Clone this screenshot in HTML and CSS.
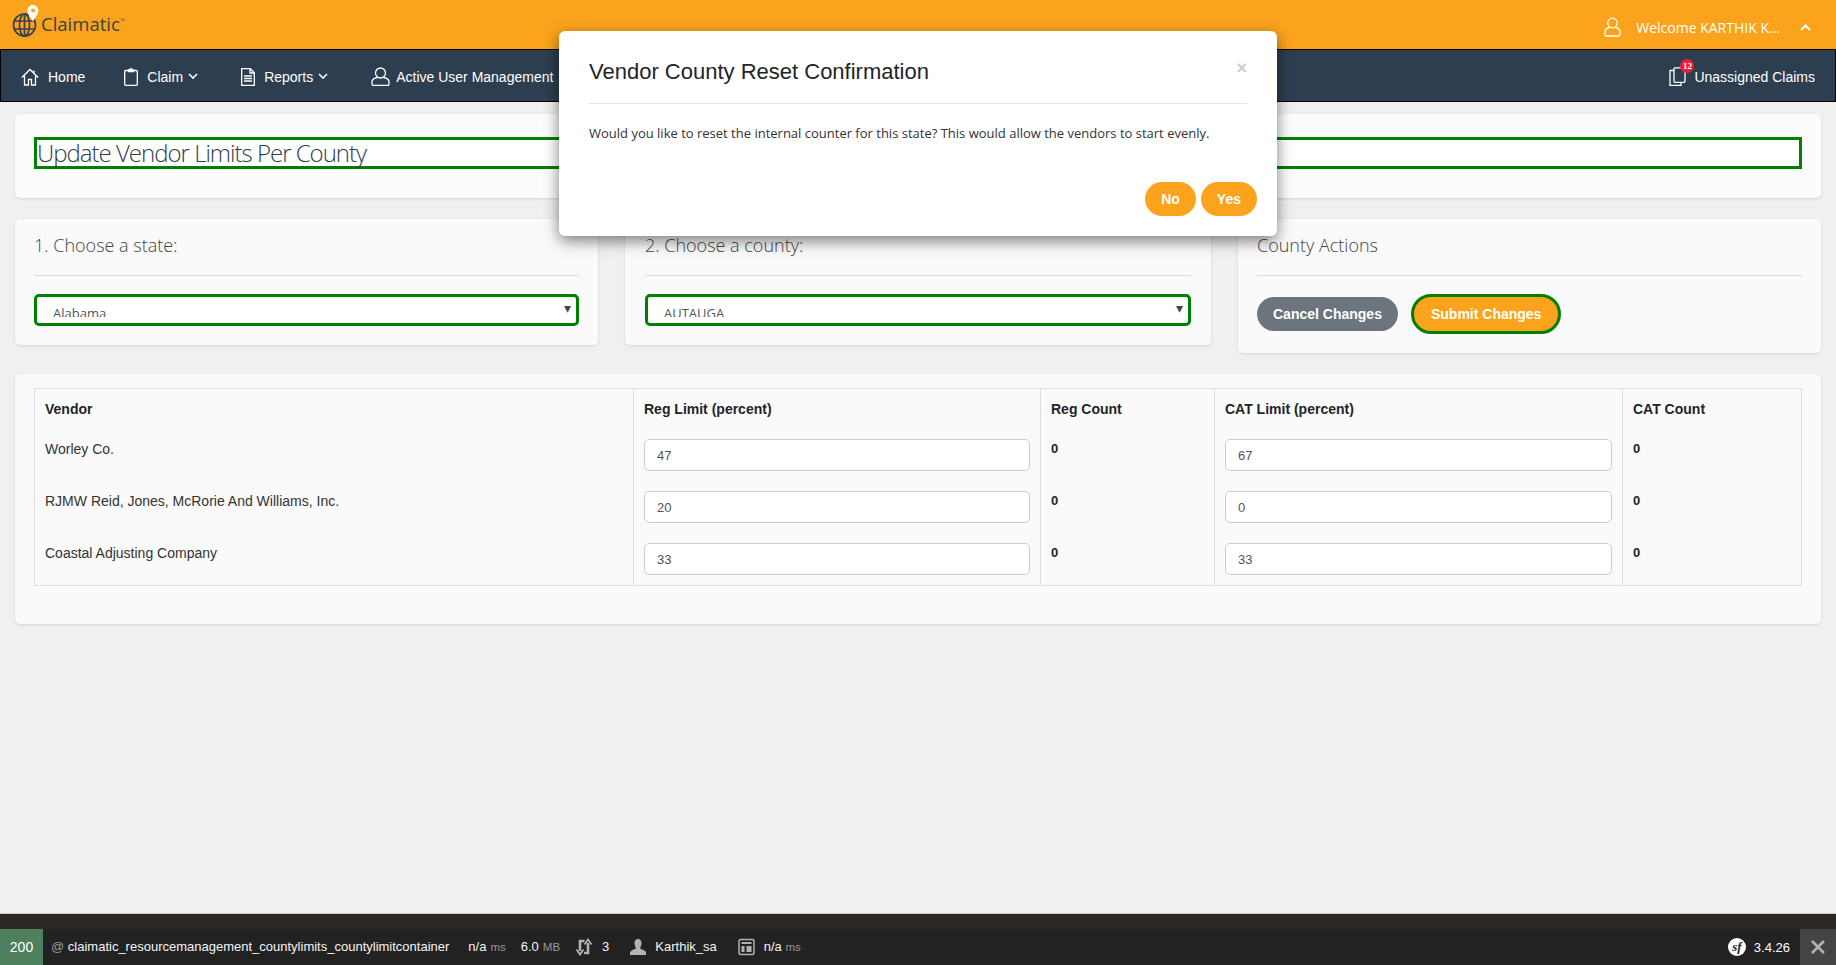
FILE: index.html
```html
<!DOCTYPE html>
<html lang="en">
<head>
  <meta charset="UTF-8"/>
  <meta name="viewport" content="width=device-width, initial-scale=1.0"/>
  <title>Update Vendor Limits Per County</title>
  <link rel="stylesheet" href="styles.css">
</head>
<body>
  <div class="topbar">
    <div class="logo">
      <svg class="logo-mark" width="28" height="34" viewBox="0 0 28 34">
        <g fill="none" stroke="#3b4148" stroke-width="1.7">
          <circle cx="12.5" cy="21" r="11"/>
          <ellipse cx="12.5" cy="21" rx="5" ry="11"/>
          <path d="M12.5 10v22M2 17h21M2 25h21"/>
        </g>
        <path d="M21 1c-3.3 0-5.6 2.5-5.6 5.5 0 3.500 3.400 7 5.600 11 2.200-4 5.400-7.500 5.400-11 0-3-2.200-5.500-5.400-5.500z" fill="#fff"/>
        <circle cx="21" cy="6.500" r="2" fill="#fba31c"/>
      </svg>
      <span class="logo-text">Claimatic</span><span class="logo-tm">™</span>
    </div>
    <div class="welcome">
      <svg width="17" height="20" viewBox="0 0 17 20" fill="none" stroke="#fff" stroke-width="1.300">
        <circle cx="8.500" cy="6" r="4.800"/>
        <path d="M5.500 10.500C2.500 11 1 12.500 1 15v2.500c0 .8.500 1.500 1.500 1.500h12c1 0 1.500-.7 1.500-1.500V15c0-2.500-1.500-4-4.500-4.500"/>
      </svg>
      <span class="welcome-name">Welcome KARTHIK K...</span>
      <svg width="11" height="7" viewBox="0 0 11 7" fill="none" stroke="#fff" stroke-width="2"><path d="M1 6l4.500-4.500L10 6"/></svg>
    </div>
  </div>

  <div class="navbar">
    <div class="nav-left">
      <a class="nav-item nav-home">
        <svg width="18" height="18" viewBox="0 0 18 18" fill="none" stroke="#fff" stroke-width="1.300">
          <path d="M.8 9.500L9 1.500l8.200 8M3.500 7.500V17h4v-5.500h3V17h4V7.500M13 2.500v2.500"/>
        </svg>
        Home
      </a>
      <a class="nav-item">
        <svg width="14" height="18" viewBox="0 0 14 18" fill="none" stroke="#fff" stroke-width="1.300">
          <rect x=".7" y="2.500" width="12.600" height="14.800" rx="1"/>
          <path d="M4.500 3.500V1.800h1.800V.8h1.400v1h1.800v1.700z"/>
        </svg>
        <span>Claim</span>
        <svg class="chev" width="10" height="6" viewBox="0 0 10 6" fill="none" stroke="#fff" stroke-width="1.600"><path d="M1 1l4 4 4-4"/></svg>
      </a>
      <a class="nav-item">
        <svg width="14" height="18" viewBox="0 0 14 18" fill="none" stroke="#fff" stroke-width="1.300">
          <path d="M.7.7h8.600l4 4v12.600H.7zM9 .7v4.300h4.300"/>
          <path d="M3 8h8M3 10.500h8M3 13h8" stroke-width="1.600"/>
        </svg>
        <span>Reports</span>
        <svg class="chev" width="10" height="6" viewBox="0 0 10 6" fill="none" stroke="#fff" stroke-width="1.600"><path d="M1 1l4 4 4-4"/></svg>
      </a>
      <a class="nav-item nav-users">
        <svg width="19" height="19" viewBox="0 0 19 19" fill="none" stroke="#fff" stroke-width="1.300">
          <circle cx="9.500" cy="6" r="5"/>
          <path d="M6.500 10.500C3 11 1 12.500 1 15v2c0 1 .7 1.500 1.500 1.500h14c.8 0 1.500-.5 1.500-1.500v-2c0-2.500-2-4-5.500-4.500"/>
        </svg>
        Active User Management
      </a>
    </div>
    <a class="nav-item unassigned">
      <span class="claims-icon">
        <svg width="17" height="19" viewBox="0 0 17 19" fill="none" stroke="#fff" stroke-width="1.300">
          <path d="M5 3.500H1v14.800h11v-3"/>
          <rect x="5" y=".8" width="11" height="14.500" rx="1"/>
        </svg>
        <span class="badge">12</span>
      </span>
      Unassigned Claims
    </a>
  </div>

  <div class="main-content">
    <div class="card title-card">
      <h1 class="page-title">Update Vendor Limits Per County</h1>
    </div>

    <div class="card-row">
      <div class="card">
        <h3 class="card-head">1. Choose a state:</h3>
        <div class="select-box"><span class="select-value">Alabama</span><i class="select-arrow">▾</i></div>
      </div>
      <div class="card card-mid">
        <h3 class="card-head">2. Choose a county:</h3>
        <div class="select-box"><span class="select-value">AUTAUGA</span><i class="select-arrow">▾</i></div>
      </div>
      <div class="card">
        <h3 class="card-head">County Actions</h3>
        <div class="actions">
          <button class="btn btn-grey">Cancel Changes</button>
          <button class="btn btn-orange btn-focus">Submit Changes</button>
        </div>
      </div>
    </div>

    <div class="card table-card">
      <table class="vendor-table">
        <colgroup>
          <col class="col-vendor"><col class="col-reg"><col class="col-count"><col class="col-cat"><col>
        </colgroup>
        <thead>
          <tr>
            <th>Vendor</th><th>Reg Limit (percent)</th><th>Reg Count</th><th>CAT Limit (percent)</th><th>CAT Count</th>
          </tr>
        </thead>
        <tbody>
          <tr>
            <td>Worley Co.</td>
            <td><input type="text" value="47"/></td>
            <td class="num">0</td>
            <td><input type="text" value="67"/></td>
            <td class="num">0</td>
          </tr>
          <tr>
            <td>RJMW Reid, Jones, McRorie And Williams, Inc.</td>
            <td><input type="text" value="20"/></td>
            <td class="num">0</td>
            <td><input type="text" value="0"/></td>
            <td class="num">0</td>
          </tr>
          <tr>
            <td>Coastal Adjusting Company</td>
            <td><input type="text" value="33"/></td>
            <td class="num">0</td>
            <td><input type="text" value="33"/></td>
            <td class="num">0</td>
          </tr>
        </tbody>
      </table>
    </div>
  </div>

  <div class="debugbar">
    <div class="debug-strip"></div>
    <div class="debug-row">
      <span class="debug-status">200</span>
      <span class="debug-route"><em>@</em> claimatic_resourcemanagement_countylimits_countylimitcontainer</span>
      <span class="debug-item">n/a <em>ms</em></span>
      <span class="debug-item">6.0 <em>MB</em></span>
      <span class="debug-item debug-wide">
        <svg width="18" height="18" viewBox="0 0 18 18" fill="none" stroke="#b3b3b3" stroke-width="2.600">
          <path d="M9.500 3H5v10M9 15h4V5"/>
          <path d="M1.500 11.500L5 16.500l3.500-5M9.500 6.500L13 1.500l3.500 5" stroke-width="1.800"/>
        </svg>
        3
      </span>
      <span class="debug-item debug-wide">
        <svg width="16" height="18" viewBox="0 0 16 18" fill="#b3b3b3">
          <path d="M8 1c2.300 0 3.500 1.700 3.500 4S10.300 9.500 10 10.500c2 1 5 2 6 3.500v3H0v-3c1-1.500 4-2.500 6-3.500C5.700 9.500 4.500 7.300 4.500 5S5.700 1 8 1z"/>
        </svg>
        Karthik_sa
      </span>
      <span class="debug-item debug-wide">
        <svg width="17" height="18" viewBox="0 0 17 18" fill="none" stroke="#b3b3b3" stroke-width="1.500">
          <rect x="1" y="1.500" width="15" height="15" rx="2"/>
          <path d="M3.500 5h10" stroke-width="2"/>
          <path d="M3.500 8h3v6h-3zM8.500 8h5v6h-5z" fill="#b3b3b3" stroke="none"/>
        </svg>
        <span>n/a <em>ms</em></span>
      </span>
      <span class="debug-right">
        <span class="sf-logo">sf</span>
        <span class="debug-version">3.4.26</span>
        <span class="debug-close">
          <svg width="14" height="14" viewBox="0 0 14 14" stroke="#b3b3b3" stroke-width="2.600"><path d="M1 1l12 12M13 1L1 13"/></svg>
        </span>
      </span>
    </div>
  </div>

  <div class="modal">
    <div class="modal-head">
      <h4 class="modal-title">Vendor County Reset Confirmation</h4>
      <span class="modal-close">×</span>
    </div>
    <p class="modal-body">Would you like to reset the internal counter for this state? This would allow the vendors to start evenly.</p>
    <div class="modal-foot">
      <button class="btn btn-orange">No</button>
      <button class="btn btn-orange">Yes</button>
    </div>
  </div>
</body>
</html>
```

FILE: styles.css
```css
* { box-sizing: border-box; margin: 0; padding: 0; }
html, body {
  height: 100%;
  overflow: hidden;
}

body {
  display: flex;
  flex-direction: column;
  position: relative;
  font-family: 'Liberation Sans', Arial, sans-serif;
  font-size: 14px;
  color: #212529;
  background: #f0f0f0;
}

.topbar {
  height: 49px;
  flex: none;
  display: flex;
  justify-content: space-between;
  align-items: center;
  background: #fba31c;
}

.logo {
  display: flex;
  align-items: center;
  padding-left: 12px;
  height: 100%;
}

.logo-mark { margin-top: -8px; flex: none; }

.logo-text {
  margin-left: 1px;
  margin-top: -2px;
  font-family: 'Open Sans', sans-serif;
  font-size: 18.5px;
  color: #3b4148;
}

.logo-tm {
  font-size: 5px;
  color: #3b4148;
  margin-top: -9px;
}

.welcome {
  display: flex;
  align-items: center;
  padding: 5px 25px 0 0;
  color: #fff;
  font-family: 'Open Sans', sans-serif;
  font-size: 14px;
}

.welcome-name { margin: 0 20px 0 15px; }

.navbar {
  height: 53px;
  flex: none;
  display: flex;
  justify-content: space-between;
  align-items: center;
  padding: 2px 20px 0;
  background: #2c3e50;
  border: 1px solid #000;
  color: #fff;
}

.nav-left {
  display: flex;
  align-items: center;
  gap: 43px;
}

.nav-item {
  display: flex;
  align-items: center;
  gap: 9px;
  color: #fff;
  font-size: 14px;
}

.nav-home { margin-right: -4px; }
.nav-users { gap: 6px; }

.nav-item .chev { margin-left: -4px; margin-top: -2px; }

.unassigned { gap: 8px; }

.claims-icon { position: relative; display: flex; margin-top: -1px; }

.badge {
  position: absolute;
  top: -8px;
  right: -8px;
  width: 14px;
  height: 14px;
  border-radius: 50%;
  background: #ed1c3a;
  color: #fff;
  font-family: 'Liberation Serif', serif;
  font-size: 9px;
  font-weight: bold;
  line-height: 14px;
  text-align: center;
}

.main-content {
  flex: 1;
  padding: 12px 15px 0;
  display: flex;
  flex-direction: column;
  gap: 21px;
  min-height: 0;
}

.card {
  background: #fafafa;
  border-radius: 5px;
  padding: 0 19px 19px;
  box-shadow: 0 1px 3px rgba(0, 0, 0, 0.12);
}

.card-mid { padding: 0 20px 19px; }

.title-card {
  height: 84px;
  padding-top: 23px;
  background: #fcfcfc;
}

.page-title {
  height: 32px;
  border: 3px solid #008000;
  background: #fff;
  font-family: 'Open Sans', sans-serif;
  font-size: 24px;
  font-weight: 300;
  letter-spacing: -1px;
  line-height: 25px;
  color: #2d3e50;
  white-space: nowrap;
}

.card-row {
  display: grid;
  grid-template-columns: 1fr 586px 1fr;
  gap: 27px;
  align-items: start;
}

.card-head {
  height: 57px;
  padding-top: 13px;
  margin-bottom: 18px;
  border-bottom: 1px solid #d8d8d8;
  font-family: 'Open Sans', sans-serif;
  font-size: 18px;
  font-weight: 300;
  line-height: 27px;
  color: #444;
}

.select-box {
  height: 32px;
  position: relative;
  overflow: hidden;
  border: 3px solid #008000;
  border-radius: 5px;
  background: #fff;
  padding: 6px 16px 0;
  font-family: 'Open Sans', sans-serif;
  font-size: 13px;
  line-height: 20px;
  color: #555;
}

.select-value {
  display: block;
  height: 14px;
  overflow: hidden;
}

.select-arrow {
  position: absolute;
  right: 5px;
  top: 1px;
  font-style: normal;
  font-size: 14px;
  color: #444;
}

.actions {
  display: flex;
  align-items: center;
  gap: 13px;
}

.btn {
  height: 34px;
  padding: 0 16px;
  border: none;
  border-radius: 17px;
  color: #fff;
  font-family: 'Liberation Sans', Arial, sans-serif;
  font-size: 14px;
  font-weight: bold;
  cursor: pointer;
}

.btn-grey { background: #6c757d; }
.btn-orange { background: #fba31c; }

.btn-focus {
  height: 40px;
  padding: 0 17px;
  border: 3px solid #008000;
  border-radius: 20px;
}

.table-card {
  padding: 14px 19px 38px;
}

.vendor-table {
  width: 100%;
  table-layout: fixed;
  border-collapse: collapse;
  border: 1px solid #ddd;
}

.col-vendor { width: 599px; }
.col-reg { width: 407px; }
.col-count { width: 174px; }
.col-cat { width: 408px; }

.vendor-table th {
  height: 40px;
  padding: 10px;
  text-align: left;
  line-height: 20px;
  border-left: 1px solid #ddd;
  color: #212529;
}

.vendor-table td {
  padding: 10px;
  line-height: 20px;
  vertical-align: top;
  border-left: 1px solid #ddd;
  color: #333;
}

.vendor-table td.num { font-size: 13px; font-weight: bold; color: #212529; }

.vendor-table input {
  display: block;
  width: 100%;
  height: 32px;
  padding: 0 12px;
  border: 1px solid #ccc;
  border-radius: 5px;
  background: #fff;
  font-family: 'Liberation Sans', Arial, sans-serif;
  font-size: 13px;
  color: #555;
}

.debugbar {
  flex: none;
  height: 52px;
  border-top: 1px solid #ccc;
  display: flex;
  flex-direction: column;
  color: #f5f5f5;
  font-size: 13px;
}

.debug-strip {
  height: 15px;
  background: #2b2825;
}

.debug-row {
  flex: 1;
  display: flex;
  align-items: center;
  padding-bottom: 1px;
  background: #222;
}

.debug-row em {
  font-style: normal;
  font-size: 11.5px;
  color: #999;
}

.debug-status {
  width: 43px;
  align-self: stretch;
  margin-bottom: -1px;
  display: flex;
  align-items: center;
  justify-content: center;
  background: #4f805d;
  font-size: 14px;
  color: #fff;
}

.debug-route { margin-left: 8px; margin-right: 19px; white-space: nowrap; }

.debug-route em { font-size: 13px; }

.debug-item {
  display: flex;
  align-items: center;
  gap: 4px;
  margin-right: 15px;
}

.debug-wide { margin-right: 21px; gap: 9px; }

.debug-right {
  margin-left: auto;
  align-self: stretch;
  margin-bottom: -1px;
  display: flex;
  align-items: center;
}

.sf-logo {
  width: 18px;
  height: 18px;
  border-radius: 50%;
  background: #fff;
  color: #222;
  font-family: 'Liberation Serif', serif;
  font-size: 13px;
  font-style: italic;
  font-weight: bold;
  line-height: 17px;
  text-align: center;
}

.debug-version { margin: 0 10px 0 8px; color: #fff; }

.debug-close {
  width: 36px;
  height: 100%;
  display: flex;
  align-items: center;
  justify-content: center;
  background: #444;
}

.modal {
  position: absolute;
  left: 559px;
  top: 31px;
  width: 718px;
  height: 205px;
  padding: 0 30px;
  background: #fff;
  border-radius: 6px;
  box-shadow: 0 5px 15px rgba(0, 0, 0, 0.5);
}

.modal-head {
  height: 73px;
  padding-top: 9px;
  display: flex;
  justify-content: space-between;
  align-items: center;
  border-bottom: 1px solid #e5e5e5;
}

.modal-title {
  font-size: 22px;
  font-weight: normal;
  color: #212529;
}

.modal-close {
  font-size: 18px;
  font-weight: bold;
  color: #ccc;
  margin-top: -7px;
  margin-right: 0;
}

.modal-body {
  margin-top: 19px;
  font-family: 'Open Sans', sans-serif;
  font-size: 13px;
  line-height: 20px;
  color: #333;
}

.modal-foot {
  position: absolute;
  right: 20px;
  bottom: 20px;
  display: flex;
  gap: 5px;
}
```
